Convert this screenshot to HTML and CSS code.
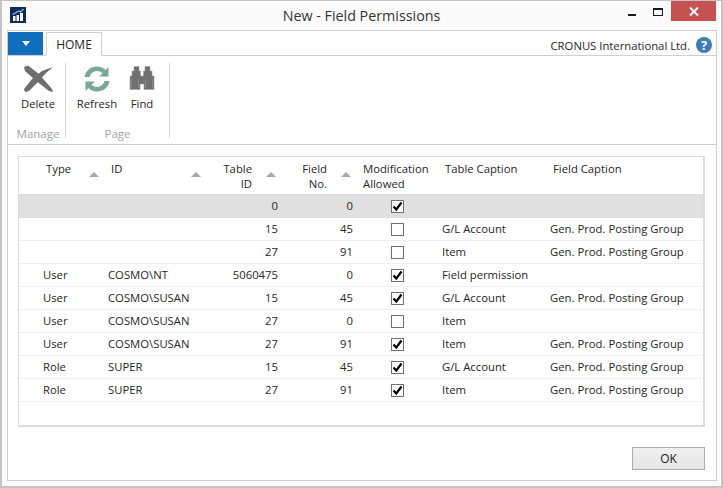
FILE: index.html
```html
<!DOCTYPE html>
<html lang="en">
  <head>
    <meta charset="UTF-8" />
    <title>New - Field Permissions</title>
    <link rel="stylesheet" href="styles.css">
  </head>
  <body>
    <div class="window">
      <div class="titlebar">
        <div class="title-left">
          <svg class="app-icon" width="16" height="16" viewBox="0 0 16 16">
            <rect width="16" height="16" fill="#0e2a5c" />
            <path d="M3 9h2.500v5H3zM6.500 8H9v6H6.500zM10 6h3v8h-3z" fill="#fff" />
            <path d="M2.500 7.500L9 4l1.500 1L13.500 2" fill="none" stroke="#8fc0e8" stroke-width="1.300" />
          </svg>
        </div>
        <div class="title">New - Field Permissions</div>
        <div class="win-controls">
          <span class="win-btn"><span class="min-icon"></span></span>
          <span class="win-btn"><span class="max-icon"></span></span>
          <span class="close-btn">
            <svg width="10" height="9" viewBox="0 0 10 9"><path d="M1 .5l8 8M9 .5l-8 8" stroke="#fff" stroke-width="2" /></svg>
          </span>
        </div>
      </div>

      <div class="panel">
        <div class="tabs">
          <div class="app-menu"><span class="menu-arrow"></span></div>
          <div class="tab">HOME</div>
          <div class="company">CRONUS International Ltd.</div>
          <div class="help">?</div>
        </div>

        <div class="ribbon">
          <div class="group group-manage">
            <div class="group-items">
              <div class="action">
                <svg width="32" height="28" viewBox="0 0 32 28">
                  <path d="M2 2L6 .5L17 9L30 24L31 27L27 26L13 15L3 6Z" fill="#6e6e6e" />
                  <path d="M31 2L20 6L10 14L2 24L3 27L7 26L15 18L24 8Z" fill="#6e6e6e" />
                </svg>
                <span>Delete</span>
              </div>
            </div>
            <div class="group-name">Manage</div>
          </div>
          <div class="group group-page">
            <div class="group-items">
              <div class="action action-refresh">
                <svg width="28" height="28" viewBox="0 0 28 28">
                  <path d="M1.500 12C2.500 5.500 8 1.500 14 1.500C17.500 1.500 20.500 3 22.500 5L25.500 2V11.500H16L19.500 8.200C18 6.800 16 6 14 6C10.500 6 7.500 8.500 6.500 12Z" fill="#7aa898" />
                  <path d="M26.500 16C25.500 22.500 20 26.500 14 26.500C10.500 26.500 7.500 25 5.500 23L2.500 26V16.500H12L8.500 19.800C10 21.200 12 22 14 22C17.500 22 20.500 19.500 21.500 16Z" fill="#7aa898" />
                </svg>
                <span>Refresh</span>
              </div>
              <div class="action action-find">
                <svg width="28" height="24" viewBox="0 0 28 24">
                  <path d="M6 .5H11V5H12.500V10H15.500V5H17V.5H22V5H24V10H26V23.500H16V18H12V23.500H2V10H4V5H6Z" fill="#707070" stroke="#a0a0a0" stroke-width=".6" />
                  <path d="M3.500 13V22M10.500 13V22M17.500 13V22M24.500 13V22" stroke="#8c8c8c" stroke-width=".8" />
                </svg>
                <span>Find</span>
              </div>
            </div>
            <div class="group-name">Page</div>
          </div>
        </div>

        <div class="content">
          <div class="grid">
            <table>
              <colgroup>
                <col class="col-type" />
                <col class="col-id" />
                <col class="col-table" />
                <col class="col-field" />
                <col class="col-mod" />
                <col class="col-tcap" />
                <col class="col-fcap" />
              </colgroup>
              <thead>
                <tr>
                  <th class="head-type"><div class="th-in"><span>Type</span><i class="sort"></i></div></th>
                  <th class="head-id"><div class="th-in"><span>ID</span><i class="sort"></i></div></th>
                  <th class="head-num"><div class="th-in"><span>Table<br />ID</span><i class="sort"></i></div></th>
                  <th class="head-num"><div class="th-in"><span>Field<br />No.</span><i class="sort"></i></div></th>
                  <th class="head-mod">Modification<br />Allowed</th>
                  <th class="head-tcap">Table Caption</th>
                  <th class="head-fcap">Field Caption</th>
                </tr>
              </thead>
              <tbody>
                <tr class="selected">
                  <td></td><td></td><td class="num">0</td><td class="num">0</td>
                  <td class="chk"><span class="box on"><svg width="11" height="11" viewBox="0 0 11 11"><path d="M1.500 5.500L4.300 8.500L9.500 1.500" fill="none" stroke="#000" stroke-width="2.200" /></svg></span></td>
                  <td></td><td></td>
                </tr>
                <tr>
                  <td></td><td></td><td class="num">15</td><td class="num">45</td>
                  <td class="chk"><span class="box"></span></td>
                  <td>G/L Account</td><td>Gen. Prod. Posting Group</td>
                </tr>
                <tr>
                  <td></td><td></td><td class="num">27</td><td class="num">91</td>
                  <td class="chk"><span class="box"></span></td>
                  <td>Item</td><td>Gen. Prod. Posting Group</td>
                </tr>
                <tr>
                  <td>User</td><td>COSMO\NT</td><td class="num">5060475</td><td class="num">0</td>
                  <td class="chk"><span class="box on"><svg width="11" height="11" viewBox="0 0 11 11"><path d="M1.500 5.500L4.300 8.500L9.500 1.500" fill="none" stroke="#000" stroke-width="2.200" /></svg></span></td>
                  <td>Field permission</td><td></td>
                </tr>
                <tr>
                  <td>User</td><td>COSMO\SUSAN</td><td class="num">15</td><td class="num">45</td>
                  <td class="chk"><span class="box on"><svg width="11" height="11" viewBox="0 0 11 11"><path d="M1.500 5.500L4.300 8.500L9.500 1.500" fill="none" stroke="#000" stroke-width="2.200" /></svg></span></td>
                  <td>G/L Account</td><td>Gen. Prod. Posting Group</td>
                </tr>
                <tr>
                  <td>User</td><td>COSMO\SUSAN</td><td class="num">27</td><td class="num">0</td>
                  <td class="chk"><span class="box"></span></td>
                  <td>Item</td><td></td>
                </tr>
                <tr>
                  <td>User</td><td>COSMO\SUSAN</td><td class="num">27</td><td class="num">91</td>
                  <td class="chk"><span class="box on"><svg width="11" height="11" viewBox="0 0 11 11"><path d="M1.500 5.500L4.300 8.500L9.500 1.500" fill="none" stroke="#000" stroke-width="2.200" /></svg></span></td>
                  <td>Item</td><td>Gen. Prod. Posting Group</td>
                </tr>
                <tr>
                  <td>Role</td><td>SUPER</td><td class="num">15</td><td class="num">45</td>
                  <td class="chk"><span class="box on"><svg width="11" height="11" viewBox="0 0 11 11"><path d="M1.500 5.500L4.300 8.500L9.500 1.500" fill="none" stroke="#000" stroke-width="2.200" /></svg></span></td>
                  <td>G/L Account</td><td>Gen. Prod. Posting Group</td>
                </tr>
                <tr>
                  <td>Role</td><td>SUPER</td><td class="num">27</td><td class="num">91</td>
                  <td class="chk"><span class="box on"><svg width="11" height="11" viewBox="0 0 11 11"><path d="M1.500 5.500L4.300 8.500L9.500 1.500" fill="none" stroke="#000" stroke-width="2.200" /></svg></span></td>
                  <td>Item</td><td>Gen. Prod. Posting Group</td>
                </tr>
              </tbody>
            </table>
          </div>
          <div class="footer">
            <button class="ok-btn">OK</button>
          </div>
        </div>
      </div>
    </div>
  </body>
</html>
```

FILE: styles.css
```css
* {
  box-sizing: border-box;
}
html,
body {
  margin: 0;
  height: 100%;
  overflow: hidden;
}
body {
  font-family: "Open Sans", "Noto Sans", sans-serif;
  font-size: 11.3px;
  color: #262626;
  background: #fff;
}
.window {
  width: 723px;
  height: 488px;
  border: 2px solid #c4c4c4;
  border-top-width: 1px;
  background: #fbfbfb;
  display: flex;
  flex-direction: column;
}
.titlebar {
  height: 29px;
  display: grid;
  grid-template-columns: 1fr auto 1fr;
  flex: none;
}
.title-left {
  padding: 6px 0 0 8px;
}
.app-icon {
  display: block;
}
.title {
  font-size: 14.3px;
  line-height: 29px;
  color: #333;
}
.win-controls {
  display: flex;
  justify-content: flex-end;
  margin-right: 5px;
  align-items: flex-start;
}
.win-btn {
  width: 26px;
  height: 20px;
  display: flex;
  align-items: center;
  justify-content: center;
}
.min-icon {
  width: 8px;
  height: 2px;
  background: #1a1a1a;
  margin-top: 7px;
}
.max-icon {
  width: 10px;
  height: 8px;
  border: 1px solid #1a1a1a;
  border-top-width: 2px;
  margin-top: 1px;
}
.close-btn {
  width: 45px;
  height: 20px;
  background: #c75050;
  display: flex;
  align-items: center;
  justify-content: center;
}
.panel {
  flex: 1;
  margin: 0 4px 5px 5px;
  border: 1px solid #cfcfcf;
  background: #fff;
  display: flex;
  flex-direction: column;
}

/* ribbon */
.tabs {
  height: 25px;
  padding-top: 1px;
  display: flex;
  border-bottom: 1px solid #cfcfcf;
  flex: none;
}
.app-menu {
  width: 35px;
  height: 23px;
  background: #106ebe;
  display: flex;
  align-items: center;
  justify-content: center;
}
.menu-arrow {
  width: 0;
  height: 0;
  border-left: 4px solid transparent;
  border-right: 4px solid transparent;
  border-top: 5px solid #fff;
}
.tab {
  width: 56px;
  height: 24px;
  margin-left: 3px;
  border: 1px solid #cfcfcf;
  border-bottom: 1px solid #fff;
  background: #fff;
  text-align: center;
  line-height: 24px;
  font-size: 12px;
}
.company {
  margin-left: auto;
  line-height: 28px;
  font-size: 11.3px;
}
.help {
  width: 16px;
  height: 16px;
  border-radius: 50%;
  background: #3f7cba;
  color: #fff;
  font-weight: bold;
  font-size: 13px;
  line-height: 16px;
  text-align: center;
  margin: 5px 4px 0 6px;
}
.ribbon {
  height: 89px;
  display: flex;
  border-bottom: 1px solid #cfcfcf;
  flex: none;
  padding-top: 7px;
}
.group {
  height: 75px;
  border-right: 1px solid #d8d8d8;
  display: flex;
  flex-direction: column;
}
.group-manage {
  width: 58px;
  padding-left: 3px;
}
.group-page {
  width: 104px;
}
.group-items {
  flex: 1;
  display: flex;
}
.group-name {
  text-align: center;
  color: #a3a3a3;
  font-size: 11.5px;
  line-height: 16px;
  margin-bottom: -4px;
}
.action {
  display: flex;
  flex-direction: column;
  align-items: center;
  padding-top: 2px;
  width: 100%;
}
.action svg {
  display: block;
  margin-bottom: 3px;
}
.action span {
  line-height: 16px;
}
.action-refresh {
  width: 62px;
  flex: none;
}
.action-find {
  width: 28px;
  flex: none;
  padding-top: 3px;
}
.action-find svg {
  margin-bottom: 6px;
}

/* grid */
.content {
  flex: 1;
  padding: 11px 11px 0 10px;
  display: flex;
  flex-direction: column;
}
.grid {
  width: 687px;
  height: 271px;
  border: 1px solid #dcdcdc;
  border-bottom-width: 2px;
  border-right-width: 2px;
  flex: none;
}
table {
  width: 684px;
  table-layout: fixed;
  border-collapse: collapse;
}
.col-type { width: 86px; }
.col-id { width: 102px; }
.col-table { width: 75px; }
.col-field { width: 75px; }
.col-mod { width: 82px; }
.col-tcap { width: 108px; }
th {
  height: 37px;
  padding: 4px 0 0 0;
  font-weight: normal;
  text-align: left;
  vertical-align: top;
  line-height: 15px;
  border-bottom: 1px solid #dcdcdc;
}
.th-in {
  display: flex;
  justify-content: space-between;
}
.head-type {
  padding-left: 27px;
}
.head-id {
  padding-left: 6px;
}
.head-num .th-in {
  justify-content: flex-end;
  text-align: right;
  gap: 14px;
}
.head-mod {
  padding-left: 6px;
}
.head-tcap,
.head-fcap {
  padding-left: 6px;
}
.sort {
  width: 0;
  height: 0;
  margin: 11px 6px 0 0;
  border-left: 5px solid transparent;
  border-right: 5px solid transparent;
  border-bottom: 5px solid #a8a8a8;
}
td {
  height: 23px;
  padding: 0 0 1px 3px;
  border-bottom: 1px solid #eeeeee;
  white-space: nowrap;
}
td:first-child {
  padding-left: 24px;
}
td.num {
  text-align: right;
  padding: 0 4px 1px 0;
}
td.chk {
  padding: 1px 0 0 34px;
}
.selected td {
  background: #e0e0e0;
  border-bottom-color: #e0e0e0;
}
.box {
  display: block;
  width: 13px;
  height: 13px;
  border: 1px solid #707070;
  background: #fff;
}
.box svg {
  display: block;
}
.footer {
  display: flex;
  justify-content: flex-end;
  padding: 20px 0 0 0;
}
.ok-btn {
  width: 73px;
  height: 23px;
  border: 1px solid #acacac;
  background: linear-gradient(#f0f0f0, #e5e5e5);
  font-family: inherit;
  font-size: 12px;
  color: #222;
  padding: 0;
}
```
